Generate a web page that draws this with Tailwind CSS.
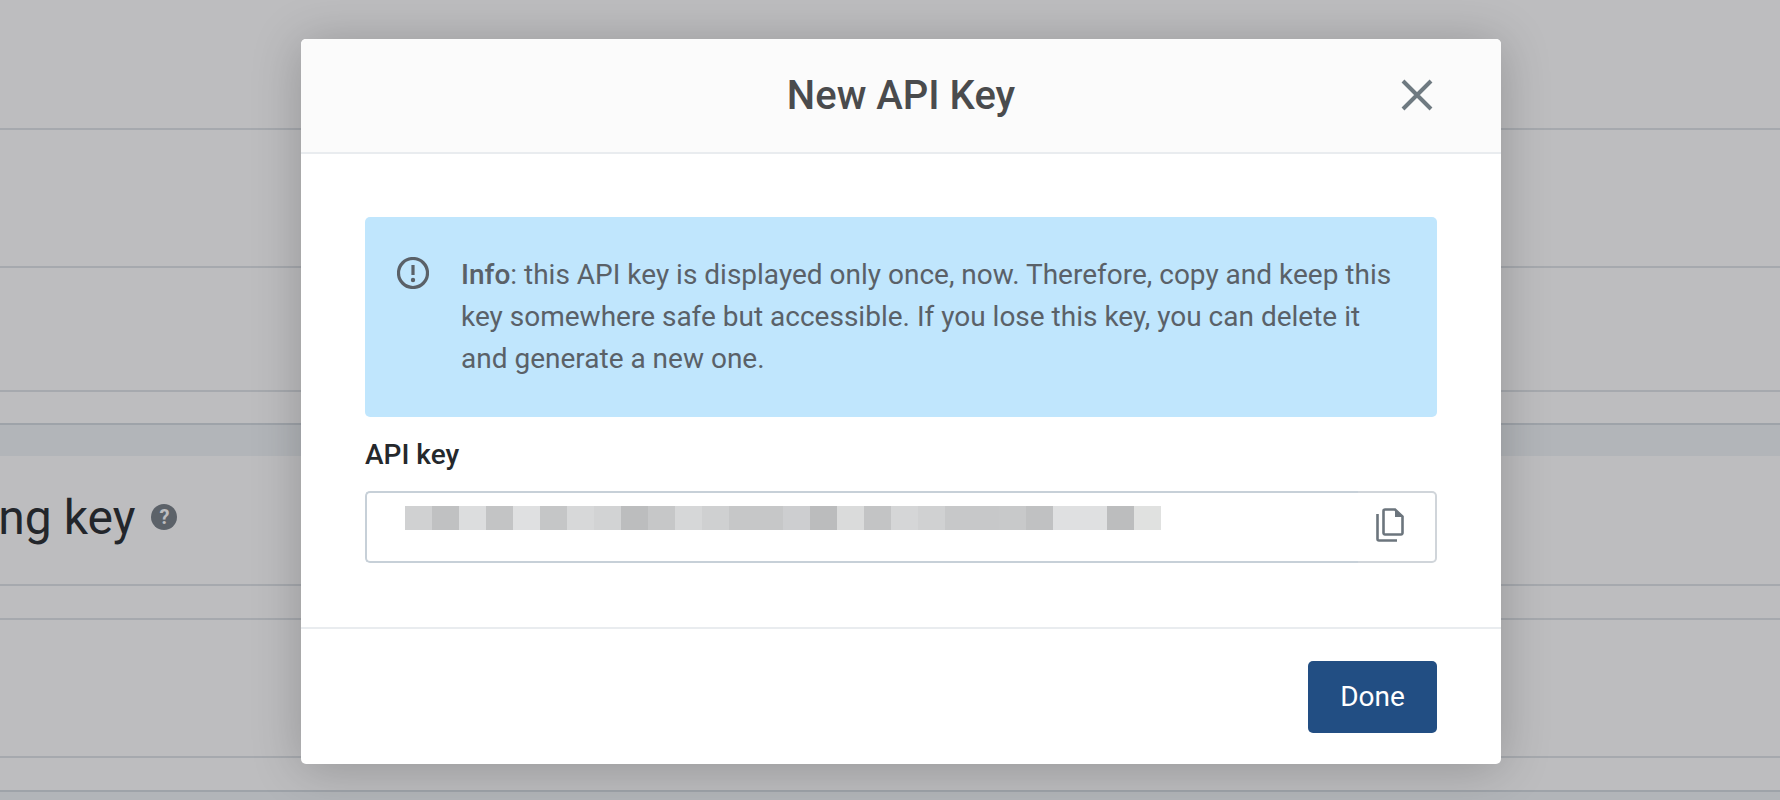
<!DOCTYPE html>
<html lang="en">
<head>
    <meta charset="UTF-8">
    <title>New API Key</title>
    <script src="https://cdn.jsdelivr.net/npm/@tailwindcss/browser@4"></script>
</head>
<body class="relative h-[800px] overflow-hidden bg-white font-['Roboto',sans-serif] text-[#212529]">
    <!-- Page behind the dialog -->
    <div class="flex flex-col">
        <div class="h-[130px] border-b-2 border-[#dee2e6]"></div>
        <div class="h-[138px] border-b-2 border-[#dee2e6]"></div>
        <div class="h-[124px] border-b-2 border-[#dee2e6]"></div>
        <div class="h-[33px] border-b-2 border-[#d3dae0]"></div>
        <div class="h-[31px] bg-[#f0f4f7]"></div>
        <div class="flex h-[130px] items-center border-b-2 border-[#dee2e6] pb-[4px]">
            <span class="-ml-[107px] text-[48px] whitespace-nowrap">Signing key</span>
            <span class="ml-[16px] -mt-[2px] flex h-[26px] w-[26px] items-center justify-center rounded-full bg-[#737b83] text-[20px] font-bold text-white">?</span>
        </div>
        <div class="h-[34px] border-b-2 border-[#dee2e6]"></div>
        <div class="h-[138px] border-b-2 border-[#dee2e6]"></div>
        <div class="h-[34px] border-b-2 border-[#d3dae0]"></div>
        <div class="h-[10px] bg-[#f0f4f7]"></div>
    </div>

    <!-- Backdrop and dialog -->
    <div class="absolute inset-0 bg-[#2a2a30]/31 pl-[301px] pt-[39px]">
        <div class="w-[1200px] overflow-hidden rounded-[5px] bg-white shadow-[0_4px_50px_rgba(0,0,0,0.22)]">
            <div class="relative flex h-[115px] items-center justify-center border-b-2 border-[#e9ecef] bg-[#fbfbfb]">
                <h2 class="text-[40px] font-medium text-[#4a4b4d]">New API Key</h2>
                <button class="absolute right-[67px] top-[39px] text-[#6f7a81]">
                    <svg class="block" width="34" height="34" viewBox="0 0 34 34" fill="none" stroke="currentColor" stroke-width="4"><path d="M3 3 L31 31 M31 3 L3 31"/></svg>
                </button>
            </div>
            <div class="px-[64px] pt-[63px] pb-[64px]">
                <div class="flex h-[200px] rounded-[5px] bg-[#c0e6fd] pl-[32px] pt-[37px] text-[#5a6168]">
                    <svg class="mt-[3px] shrink-0" width="32" height="32" viewBox="0 0 32 32" fill="none" stroke="currentColor"><circle cx="16" cy="16" r="14.5" stroke-width="3.2"/><path d="M16 8 V18" stroke-width="3.2"/><circle cx="16" cy="23" r="2.2" fill="currentColor" stroke="none"/></svg>
                    <p class="ml-[32px] w-[940px] text-[28px] leading-[42px]"><b class="font-medium">Info</b>: this API key is displayed only once, now. Therefore, copy and keep this key somewhere safe but accessible. If you lose this key, you can delete it and generate a new one.</p>
                </div>
                <label class="mt-[20px] block text-[28px] leading-[36px] font-medium text-[#25282c]">API key</label>
                <div class="mt-[18px] flex h-[72px]">
                    <div class="flex flex-1 rounded-l-[5px] border-y-2 border-l-2 border-[#c7d0d8] pl-[38px] pt-[13px]">
                        <div class="flex h-[24px]">
                            <span class="w-[27px] bg-[#d0d1d2]"></span>
                            <span class="w-[27px] bg-[#c0c1c2]"></span>
                            <span class="w-[27px] bg-[#dcddde]"></span>
                            <span class="w-[27px] bg-[#c3c4c5]"></span>
                            <span class="w-[27px] bg-[#dfe0e1]"></span>
                            <span class="w-[27px] bg-[#c5c6c7]"></span>
                            <span class="w-[27px] bg-[#d7d8d9]"></span>
                            <span class="w-[27px] bg-[#d2d3d4]"></span>
                            <span class="w-[27px] bg-[#bcbdbe]"></span>
                            <span class="w-[27px] bg-[#c6c7c8]"></span>
                            <span class="w-[27px] bg-[#d6d7d8]"></span>
                            <span class="w-[27px] bg-[#cfd0d1]"></span>
                            <span class="w-[27px] bg-[#c6c7c8]"></span>
                            <span class="w-[27px] bg-[#c6c7c8]"></span>
                            <span class="w-[27px] bg-[#cdced0]"></span>
                            <span class="w-[27px] bg-[#bbbcbd]"></span>
                            <span class="w-[27px] bg-[#dadbdb]"></span>
                            <span class="w-[27px] bg-[#c3c4c5]"></span>
                            <span class="w-[27px] bg-[#d5d6d7]"></span>
                            <span class="w-[27px] bg-[#d0d1d2]"></span>
                            <span class="w-[27px] bg-[#c7c8c9]"></span>
                            <span class="w-[27px] bg-[#c7c8c9]"></span>
                            <span class="w-[27px] bg-[#c8c9ca]"></span>
                            <span class="w-[27px] bg-[#c0c1c2]"></span>
                            <span class="w-[27px] bg-[#dfe0e1]"></span>
                            <span class="w-[27px] bg-[#dfe0e1]"></span>
                            <span class="w-[27px] bg-[#bcbdbe]"></span>
                            <span class="w-[27px] bg-[#e0e1e0]"></span>
                        </div>
                    </div>
                    <button class="flex w-[79px] items-start rounded-r-[5px] border-y-2 border-r-2 border-[#d0d5da] pl-[18px] pt-[15px] text-[#6c757d]">
                        <svg class="block" width="28" height="34" viewBox="0 0 28 34" fill="none" stroke="currentColor" stroke-width="2.6"><path d="M1.5 6 V31 a1.5 1.5 0 0 0 1.5 1.5 H21"/><path d="M7.5 3 a1.5 1.5 0 0 1 1.5 -1.5 H19 L26.500 8.500 V25 a1.500 1.500 0 0 1 -1.500 1.500 H9 a1.500 1.500 0 0 1 -1.500 -1.500 Z"/><path d="M19 2 L26 9 H19 Z" fill="currentColor" stroke="none"/></svg>
                    </button>
                </div>
            </div>
            <div class="flex h-[137px] items-start justify-end border-t-2 border-[#e9ecef] px-[64px] pt-[32px]">
                <button class="h-[72px] w-[129px] rounded-[5px] bg-[#224e83] text-[28px] text-white">Done</button>
            </div>
        </div>
    </div>
</body>
</html>
